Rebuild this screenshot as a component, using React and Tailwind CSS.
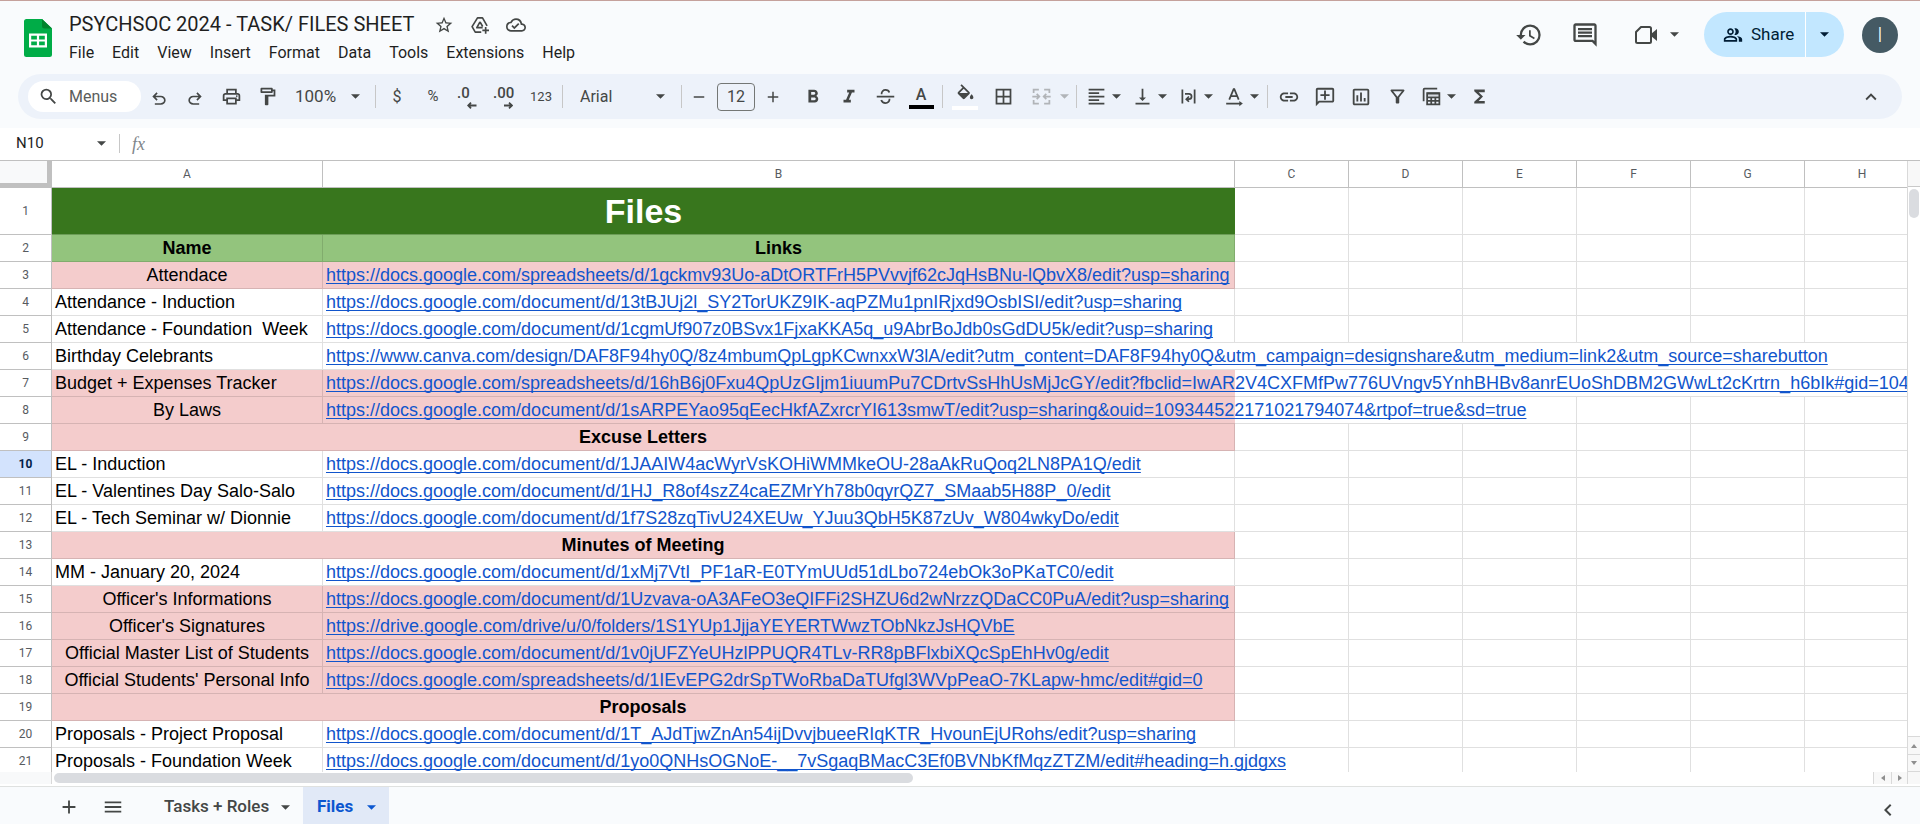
import React from "react";
import {
  MdStarOutline,
  MdOutlineCloudDone,
  MdHistory,
  MdOutlineComment,
  MdOutlinePeopleAlt,
  MdSearch,
  MdOutlinePrint,
  MdOutlineFormatPaint,
  MdRemove,
  MdAdd,
  MdFormatBold,
  MdFormatItalic,
  MdBorderAll,
  MdFormatAlignLeft,
  MdVerticalAlignBottom,
  MdLink,
  MdOutlineAddComment,
  MdOutlineInsertChart,
  MdOutlineFilterAlt,
  MdFunctions,
  MdKeyboardArrowUp,
  MdKeyboardArrowLeft,
  MdMenu,
} from "react-icons/md";

function Caret({ className = "" }) {
  return (
    <svg viewBox="0 0 10 5" className={"h-[5px] w-[9px] shrink-0 fill-current " + className} aria-hidden="true">
      <path d="M0 0h10L5 5z" />
    </svg>
  );
}

function StrokeIcon({ children, className = "size-[21px]" }) {
  return (
    <svg viewBox="0 0 24 24" className={className} fill="none" stroke="currentColor" strokeWidth="2" aria-hidden="true">
      {children}
    </svg>
  );
}

function UndoIcon({ className = "" }) {
  return (
    <svg viewBox="0 0 24 24" className={"mt-1 size-5 fill-current " + className} aria-hidden="true">
      <path d="M7 19v-2h7.1q1.575 0 2.738-1T18 13.5 16.838 11 14.1 10H7.8l2.6 2.6L9 14 4 9l5-5 1.4 1.4L7.8 8h6.3q2.425 0 4.163 1.575T20 13.5t-1.737 3.925T14.1 19z" />
    </svg>
  );
}

function SheetsLogo() {
  return (
    <svg viewBox="0 0 28 38" className="h-[38px] w-7" aria-hidden="true">
      <path d="M2.5 0H18l10 9.500V35.500a2.500 2.500 0 0 1-2.500 2.500h-23A2.500 2.500 0 0 1 0 35.500v-33A2.500 2.500 0 0 1 2.500 0z" fill="#00ac47" />
      <path d="M18 0l10 9.500H20.500A2.500 2.500 0 0 1 18 7z" fill="#00832d" />
      <path d="M5 14.500h18v14H5zM7.200 16.700v3.700h5.700v-3.700zM15.100 16.700v3.700h5.700v-3.700zM7.200 22.600v3.700h5.700v-3.700zM15.100 22.600v3.700h5.700v-3.700z" fill="#fff" fillRule="evenodd" />
    </svg>
  );
}

function DriveAddIcon() {
  return (
    <StrokeIcon className="size-5">
      <path d="M13.500 20.500H6.300L2.500 14 9 3.500h6L20.500 13M12 8.300L8.200 15.200h7M12 8.300l3.200 5.500M18.800 14.500v8M14.800 18.500h8" strokeLinejoin="round" />
    </StrokeIcon>
  );
}

function CameraIcon() {
  return (
    <svg viewBox="0 0 24 20" className="h-5 w-6" aria-hidden="true">
      <path d="M7 2h8.500a1.500 1.500 0 0 1 1.500 1.500v13a1.500 1.500 0 0 1-1.500 1.500h-12A1.500 1.500 0 0 1 2 16.500V7z" fill="none" stroke="currentColor" strokeWidth="2" strokeLinejoin="round" />
      <path d="M17 9l6-5v12l-6-5z" fill="currentColor" />
    </svg>
  );
}

function StrikeIcon() {
  return (
    <StrokeIcon>
      <path d="M2 12h20M7.500 9.500C7.300 6.300 9.500 4.500 12 4.500c2.200 0 3.800 1.100 4.400 3M16.600 14.500c.2 3-2 5-4.600 5-2.500 0-4.200-1.300-4.900-3.500" />
    </StrokeIcon>
  );
}

function FillIcon() {
  return (
    <svg viewBox="0 0 24 20" className="h-[18px] w-[21px] fill-current" aria-hidden="true">
      <path d="M16.560 8.940L7.620 0 6.210 1.410l2.380 2.380-5.150 5.150a1.490 1.490 0 0 0 0 2.120l5.500 5.500c.29.290.68.440 1.060.440s.77-.15 1.060-.44l5.500-5.500c.59-.58.59-1.530 0-2.120zM10 5.210L14.790 10H5.210zM19 11.500s-2 2.170-2 3.500c0 1.100.9 2 2 2s2-.9 2-2c0-1.330-2-3.500-2-3.500z" />
    </svg>
  );
}

function MergeIcon() {
  return (
    <StrokeIcon>
      <path d="M3 8V4h6M15 4h6v4M3 16v4h6M15 20h6v-4M1.500 12h8M22.500 12h-8M6.500 9l3 3-3 3M17.500 9l-3 3 3 3" />
    </StrokeIcon>
  );
}

function WrapIcon() {
  return (
    <StrokeIcon>
      <path d="M5 4v16M19 4v16M8 9h4.500a3 3 0 0 1 0 6H9.500M12.500 12l-3 3 3 3" />
    </StrokeIcon>
  );
}

function RotateTextIcon() {
  return (
    <StrokeIcon>
      <path d="M6 15.500L11 3.500h.8L16.800 15.500M7.800 11.500h7.200M2.500 20H19" />
      <path d="M17.500 17l4 3-4 3z" fill="currentColor" stroke="none" />
    </StrokeIcon>
  );
}

function TableViewIcon() {
  return (
    <StrokeIcon>
      <path d="M3 17.500V4a1 1 0 0 1 1-1h14.500M7 8h14v13H7zM7 13h14M7 17h14M11.700 13v8M16.400 13v8" />
      <path d="M7 7h14v3.500H7z" fill="currentColor" stroke="none" opacity=".55" />
    </StrokeIcon>
  );
}

function ToolButton({ label, width = "w-9", children }) {
  return (
    <button type="button" aria-label={label} className={"flex h-9 shrink-0 items-center justify-center " + width}>
      {children}
    </button>
  );
}

function DropButton({ label, children, wide, className = "" }) {
  return (
    <button type="button" aria-label={label} className={"flex h-9 shrink-0 items-center " + (wide ? "w-[51px] " : "w-[46px] ") + className}>
      <span className={"flex shrink-0 justify-center " + (wide ? "w-[38px]" : "w-8")}>{children}</span>
      <Caret />
    </button>
  );
}

function Separator() {
  return <span className="mx-[3px] h-[23px] w-px shrink-0 bg-[#c7c7c7]" />;
}

function DecimalIcon({ text, more }) {
  return (
    <span className="relative flex h-9 w-6 justify-start pt-1 text-[15px] leading-5 font-medium">
      {text}
      <svg viewBox="0 0 10 7" className="absolute right-1 bottom-[6px] h-[7px] w-[10px]" fill="none" stroke="currentColor" strokeWidth="1.800" aria-hidden="true">
        <path d={more ? "M1 3.500h8M6 .7l3 2.800-3 2.800" : "M9.500 3.500H1.500M4 .7L1.200 3.500 4 6.300"} />
      </svg>
    </span>
  );
}

const MENUS = ["File", "Edit", "View", "Insert", "Format", "Data", "Tools", "Extensions", "Help"];

function Header() {
  return (
    <header className="flex h-[74px] items-start border-t border-[#c5a19c] pr-[22px] pl-6">
      <div className="pt-[18px]">
        <SheetsLogo />
      </div>
      <div className="ml-[17px]">
        <div className="flex h-8 items-center pt-[14px]">
          <h1 className="text-xl leading-8 whitespace-nowrap text-[#1f1f1f]">PSYCHSOC 2024 - TASK/ FILES SHEET</h1>
          <div className="ml-5 flex items-center gap-4 pt-[2px] text-[#444746]">
            <button type="button" aria-label="Star"><MdStarOutline className="size-5" /></button>
            <button type="button" aria-label="Add shortcut to Drive"><DriveAddIcon /></button>
            <button type="button" aria-label="Saved to Drive"><MdOutlineCloudDone className="size-5" /></button>
          </div>
        </div>
        <nav className="mt-2 flex gap-[18px] text-base leading-6 text-[#1f1f1f]">
          {MENUS.map((m) => (
            <button type="button" key={m}>{m}</button>
          ))}
        </nav>
      </div>
      <div className="ml-auto flex items-center pt-[11px] text-[#444746]">
        <button type="button" aria-label="Version history" className="mr-7"><MdHistory className="size-7" /></button>
        <button type="button" aria-label="Comments" className="mr-[35px]"><MdOutlineComment className="size-7" /></button>
        <button type="button" aria-label="Join a call" className="mr-[25px] flex items-center gap-3">
          <CameraIcon />
          <Caret />
        </button>
        <div className="flex h-[45px] w-[140px] overflow-hidden rounded-full bg-[#c2e7ff] text-[#001d35]">
          <button type="button" className="flex w-[102px] items-center gap-2 border-r border-white pl-[19px] text-[17px]">
            <MdOutlinePeopleAlt className="size-5" />
            Share
          </button>
          <button type="button" aria-label="Share options" className="flex flex-1 items-center pl-[14px]"><Caret /></button>
        </div>
        <button type="button" aria-label="Account" className="ml-[18px] flex size-9 items-center justify-center rounded-full bg-[#455a64] text-xl font-light text-white">I</button>
      </div>
    </header>
  );
}

function Toolbar() {
  return (
    <div role="toolbar" className="mx-[18px] mb-[9px] flex h-[45px] items-center overflow-hidden rounded-full bg-[#edf2fa] pl-[10px] text-[#444746]">
      <label className="flex h-[31px] w-[113px] shrink-0 items-center rounded-full bg-white pl-[10px]">
        <MdSearch className="size-[21px] shrink-0" />
        <input aria-label="Menus" placeholder="Menus" className="ml-[10px] w-[60px] text-base outline-none placeholder:text-[#5a5d5c]" />
      </label>
      <ToolButton label="Undo"><UndoIcon /></ToolButton>
      <ToolButton label="Redo"><UndoIcon className="-scale-x-100" /></ToolButton>
      <ToolButton label="Print"><MdOutlinePrint className="size-[21px]" /></ToolButton>
      <ToolButton label="Paint format"><MdOutlineFormatPaint className="size-[21px]" /></ToolButton>
      <label className="flex w-[87px] shrink-0 items-center pl-[10px]">
        <select aria-label="Zoom" className="w-[56px] appearance-none text-[17px] outline-none">
          <option>100%</option>
        </select>
        <Caret />
      </label>
      <Separator />
      <ToolButton label="Format as currency"><span className="text-base">$</span></ToolButton>
      <ToolButton label="Format as percent"><span className="text-[15px]">%</span></ToolButton>
      <ToolButton label="Decrease decimal places"><DecimalIcon text=".0" /></ToolButton>
      <ToolButton label="Increase decimal places"><DecimalIcon text=".00" more /></ToolButton>
      <ToolButton label="More formats"><span className="text-[13px]">123</span></ToolButton>
      <Separator />
      <label className="flex w-[112px] shrink-0 items-center pl-[14px]">
        <select aria-label="Font" className="w-[76px] appearance-none text-base outline-none">
          <option>Arial</option>
        </select>
        <Caret />
      </label>
      <Separator />
      <ToolButton label="Decrease font size" width="w-7"><MdRemove className="size-[18px]" /></ToolButton>
      <input aria-label="Font size" defaultValue="12" className="mx-1 h-7 w-[38px] shrink-0 rounded border border-[#747775] text-center text-base outline-none" />
      <ToolButton label="Increase font size" width="w-7"><MdAdd className="size-[18px]" /></ToolButton>
      <div className="ml-2 flex">
        <ToolButton label="Bold"><MdFormatBold className="size-[22px]" /></ToolButton>
        <ToolButton label="Italic"><MdFormatItalic className="size-[22px]" /></ToolButton>
        <ToolButton label="Strikethrough"><StrikeIcon /></ToolButton>
        <ToolButton label="Text color">
          <span className="flex w-[25px] flex-col items-center border-b-4 border-black text-base leading-5 font-medium">A</span>
        </ToolButton>
      </div>
      <Separator />
      <ToolButton label="Fill color" width="w-[38px]">
        <span className="flex w-[26px] flex-col items-center border-b-4 border-white pb-1"><FillIcon /></span>
      </ToolButton>
      <ToolButton label="Borders" width="w-[38px]"><MdBorderAll className="size-[21px]" /></ToolButton>
      <DropButton label="Merge cells" wide className="text-[#b1b4b8]"><MergeIcon /></DropButton>
      <Separator />
      <DropButton label="Horizontal align"><MdFormatAlignLeft className="size-[21px]" /></DropButton>
      <DropButton label="Vertical align"><MdVerticalAlignBottom className="size-[21px]" /></DropButton>
      <DropButton label="Text wrapping"><WrapIcon /></DropButton>
      <DropButton label="Text rotation"><RotateTextIcon /></DropButton>
      <Separator />
      <ToolButton label="Insert link"><MdLink className="size-[22px]" /></ToolButton>
      <ToolButton label="Insert comment"><MdOutlineAddComment className="size-[22px] -scale-x-100" /></ToolButton>
      <ToolButton label="Insert chart"><MdOutlineInsertChart className="size-[22px]" /></ToolButton>
      <ToolButton label="Create a filter"><MdOutlineFilterAlt className="size-[21px]" /></ToolButton>
      <DropButton label="Table views"><TableViewIcon /></DropButton>
      <ToolButton label="Functions"><MdFunctions className="size-[21px]" /></ToolButton>
      <button type="button" aria-label="Hide the menus" className="mr-5 ml-auto shrink-0"><MdKeyboardArrowUp className="size-[22px]" /></button>
    </div>
  );
}

function FormulaBar() {
  return (
    <div className="flex h-8 items-center bg-white pb-px">
      <label className="flex w-[119px] items-center pl-4 text-[#444746]">
        <input aria-label="Name box" defaultValue="N10" className="w-20 text-[15px] text-[#1f1f1f] outline-none" />
        <Caret className="ml-px" />
      </label>
      <span className="h-[19px] w-px bg-[#c7c7c7]" />
      <label htmlFor="formula" className="ml-3 w-6 font-['Liberation_Serif',serif] text-lg leading-6 text-[#80868b] italic">fx</label>
      <input id="formula" className="flex-1 outline-none" />
    </div>
  );
}

const D = "https://docs.google.com/document/d/";
const S = "https://docs.google.com/spreadsheets/d/";

// fill: pink row; center: centred name; spill: how many column edges the link text runs across
const ROWS = [
  { title: "Files" },
  { head: true },
  { name: "Attendace", link: S + "1gckmv93Uo-aDtORTFrH5PVvvjf62cJqHsBNu-lQbvX8/edit?usp=sharing", fill: true, center: true },
  { name: "Attendance - Induction", link: D + "13tBJUj2l_SY2TorUKZ9IK-aqPZMu1pnIRjxd9OsbISI/edit?usp=sharing" },
  { name: "Attendance - Foundation  Week", link: D + "1cgmUf907z0BSvx1FjxaKKA5q_u9AbrBoJdb0sGdDU5k/edit?usp=sharing" },
  { name: "Birthday Celebrants", link: "https://www.canva.com/design/DAF8F94hy0Q/8z4mbumQpLgpKCwnxxW3lA/edit?utm_content=DAF8F94hy0Q&utm_campaign=designshare&utm_medium=link2&utm_source=sharebutton", spill: 6 },
  { name: "Budget + Expenses Tracker", link: S + "16hB6j0Fxu4QpUzGIjm1iuumPu7CDrtvSsHhUsMjJcGY/edit?fbclid=IwAR2V4CXFMfPw776UVngv5YnhBHBv8anrEUoShDBM2GWwLt2cKrtrn_h6bIk#gid=104", fill: true, spill: 6 },
  { name: "By Laws", link: D + "1sARPEYao95qEecHkfAZxrcrYI613smwT/edit?usp=sharing&ouid=109344522171021794074&rtpof=true&sd=true", fill: true, center: true, spill: 3 },
  { section: "Excuse Letters" },
  { name: "EL - Induction", link: D + "1JAAIW4acWyrVsKOHiWMMkeOU-28aAkRuQoq2LN8PA1Q/edit", active: true },
  { name: "EL - Valentines Day Salo-Salo", link: D + "1HJ_R8of4szZ4caEZMrYh78b0qyrQZ7_SMaab5H88P_0/edit" },
  { name: "EL - Tech Seminar w/ Dionnie", link: D + "1f7S28zqTivU24XEUw_YJuu3QbH5K87zUv_W804wkyDo/edit" },
  { section: "Minutes of Meeting" },
  { name: "MM - January 20, 2024", link: D + "1xMj7VtI_PF1aR-E0TYmUUd51dLbo724ebOk3oPKaTC0/edit" },
  { name: "Officer's Informations", link: D + "1Uzvava-oA3AFeO3eQIFFi2SHZU6d2wNrzzQDaCC0PuA/edit?usp=sharing", fill: true, center: true },
  { name: "Officer's Signatures", link: "https://drive.google.com/drive/u/0/folders/1S1YUp1JjjaYEYERTWwzTObNkzJsHQVbE", fill: true, center: true },
  { name: "Official Master List of Students", link: D + "1v0jUFZYeUHzlPPUQR4TLv-RR8pBFlxbiXQcSpEhHv0g/edit", fill: true, center: true },
  { name: "Official Students' Personal Info", link: S + "1IEvEPG2drSpTWoRbaDaTUfgl3WVpPeaO-7KLapw-hmc/edit#gid=0", fill: true, center: true },
  { section: "Proposals" },
  { name: "Proposals - Project Proposal", link: D + "1T_AJdTjwZnAn54ijDvvjbueeRIqKTR_HvounEjURohs/edit?usp=sharing" },
  { name: "Proposals - Foundation Week", link: D + "1yo0QNHsOGNoE-__7vSgaqBMacC3Ef0BVNbKfMqzZTZM/edit#heading=h.gjdgxs", spill: 1 },
];

const CELL = "h-[27px] border-b border-black/12 p-0 ";

function EmptyCells({ spill = 0 }) {
  return ["C", "D", "E", "F", "G", "H"].map((c, i) => (
    <td key={c} className={"border-b border-black/12 p-0 " + (c !== "H" && i + 1 >= spill ? "border-r" : "")} />
  ));
}

function SheetRow({ row, n }) {
  let cells;
  if (row.title) {
    cells = <th colSpan={2} className="h-[47px] border-b border-[#6c9d57] bg-[#38761d] p-0 text-[34px] leading-[46px] font-bold text-white">{row.title}</th>;
  } else if (row.head) {
    cells = (
      <>
        <th className={CELL + "border-r bg-[#93c47d]"}>Name</th>
        <th className={CELL + "border-r bg-[#93c47d]"}>Links</th>
      </>
    );
  } else if (row.section) {
    cells = <th colSpan={2} className={CELL + "border-r bg-[#f4cccc]"}>{row.section}</th>;
  } else {
    const bg = row.fill ? "bg-[#f4cccc] " : "";
    cells = (
      <>
        <td className={CELL + bg + "border-r " + (row.center ? "text-center" : "pl-[3px]")}>{row.name}</td>
        <td className={CELL + bg + "pl-[3px] " + (row.spill ? "" : "border-r")}>
          <a href={row.link} className="text-[#1155cc] underline decoration-1 underline-offset-2 [text-decoration-skip-ink:none]">{row.link}</a>
        </td>
      </>
    );
  }
  return (
    <tr>
      <th
        scope="row"
        className={
          "border-r border-b border-[#c0c0c0] p-0 font-[Roboto,sans-serif] text-xs " +
          (row.active ? "bg-[#d3e3fd] font-bold text-[#041e49]" : "bg-white font-normal text-[#575b5f]")
        }
      >
        {n}
      </th>
      {cells}
      <EmptyCells spill={row.spill} />
    </tr>
  );
}

function Sheet() {
  return (
    <div className="flex min-h-0 flex-1 border-t border-[#c0c0c0] bg-white">
      <div className="min-w-0 flex-1 overflow-hidden">
        <table className="w-full table-fixed border-separate border-spacing-0 font-['Liberation_Sans',Arial,sans-serif] text-lg leading-[26px] whitespace-pre text-black">
          <colgroup>
            <col className="w-[52px]" />
            <col className="w-[271px]" />
            <col className="w-[912px]" />
            <col className="w-[114px]" />
            <col className="w-[114px]" />
            <col className="w-[114px]" />
            <col className="w-[114px]" />
            <col className="w-[114px]" />
            <col />
          </colgroup>
          <thead className="font-[Roboto,sans-serif] text-xs text-[#575b5f]">
            <tr>
              <td className="h-[27px] border-r-[5px] border-b-[5px] border-[#c0c0c0] bg-[#f8f9fa] p-0" />
              {["A", "B", "C", "D", "E", "F", "G"].map((c) => (
                <th key={c} className="border-r border-b border-[#c0c0c0] p-0 leading-[26px] font-normal">{c}</th>
              ))}
              <th className="border-b border-[#c0c0c0] p-0 pl-3 leading-[26px] font-normal">H</th>
            </tr>
          </thead>
          <tbody>
            {ROWS.map((row, i) => (
              <SheetRow key={i} row={row} n={i + 1} />
            ))}
          </tbody>
        </table>
      </div>
      <div className="flex w-[13px] flex-col border-l border-[#d9d9d9] text-[#8f8f8f]">
        <div className="h-[26px] shrink-0 border-b border-[#c9c9c9] bg-[#f8f8f8]" />
        <div className="mt-[2px] ml-px h-[29px] w-[10px] rounded-full bg-[#dadce0]" />
        <button type="button" aria-label="Scroll up" className="mt-auto flex h-[18px] shrink-0 items-center justify-center border-t border-[#d9d9d9] bg-[#f8f8f8]">
          <svg viewBox="0 0 6 4" className="h-1 w-1.5 fill-current"><path d="M0 4h6L3 0z" /></svg>
        </button>
        <button type="button" aria-label="Scroll down" className="flex h-[18px] shrink-0 items-center justify-center border-y border-[#d9d9d9] bg-[#f8f8f8]">
          <svg viewBox="0 0 6 4" className="h-1 w-1.5 fill-current"><path d="M0 0h6L3 4z" /></svg>
        </button>
      </div>
    </div>
  );
}

function HorizontalScroll() {
  return (
    <div className="flex h-[15px] shrink-0 border-b border-[#dfe1e0] bg-white pb-[2px] text-[#8f8f8f]">
      <div className="w-[52px] border-r border-[#d9d9d9] bg-[#f8f9fa]" />
      <div className="mt-px ml-[2px] h-[10px] w-[859px] rounded-full bg-[#dadce0]" />
      <div className="ml-auto flex bg-[#f8f8f8]">
        <button type="button" aria-label="Scroll left" className="flex w-[18px] items-center justify-center border-l border-[#d9d9d9]">
          <svg viewBox="0 0 4 6" className="h-1.5 w-1 fill-current"><path d="M4 0v6L0 3z" /></svg>
        </button>
        <button type="button" aria-label="Scroll right" className="flex w-4 items-center justify-center border-l border-[#d9d9d9]">
          <svg viewBox="0 0 4 6" className="h-1.5 w-1 fill-current"><path d="M0 0v6l4-3z" /></svg>
        </button>
        <div className="w-[13px] border-l border-[#d9d9d9]" />
      </div>
    </div>
  );
}

function SheetTabs() {
  return (
    <footer className="flex h-[37px] shrink-0 items-center pl-[58px] text-[#444746]">
      <button type="button" aria-label="Add sheet" className="pt-[3px]"><MdAdd className="size-[22px]" /></button>
      <button type="button" aria-label="All sheets" className="ml-[22px] pt-[3px]"><MdMenu className="size-[22px]" /></button>
      <button type="button" className="ml-10 flex h-full w-[139px] items-center justify-between pt-[3px] pr-[13px] text-[17px] font-medium">
        Tasks + Roles
        <Caret />
      </button>
      <button type="button" className="flex h-full w-[86px] items-center justify-between bg-[#e1e9f7] pt-[3px] pr-[13px] pl-[14px] text-[17px] font-bold text-[#0b57d0]">
        Files
        <Caret />
      </button>
      <button type="button" aria-label="Show side panel" className="mt-2 mr-5 ml-auto"><MdKeyboardArrowLeft className="size-6" /></button>
    </footer>
  );
}

export default function App() {
  return (
    <div className="flex h-screen flex-col overflow-hidden bg-[#f9fbfd] font-[Roboto,sans-serif]">
      <Header />
      <Toolbar />
      <FormulaBar />
      <Sheet />
      <HorizontalScroll />
      <SheetTabs />
    </div>
  );
}
